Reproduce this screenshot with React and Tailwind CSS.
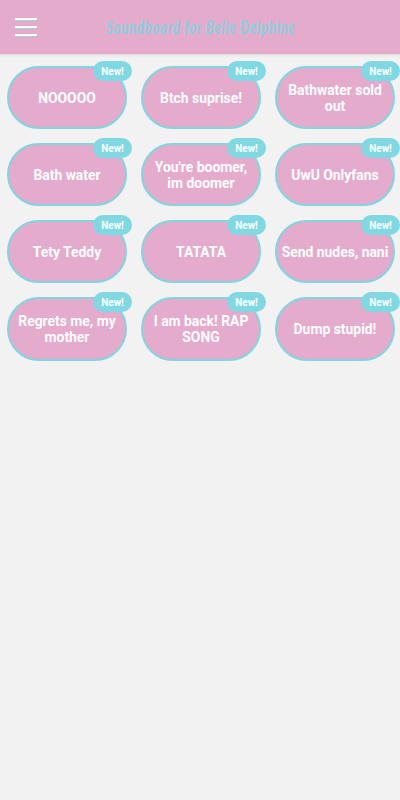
import React from 'react';

const SOUNDS = [
  'NOOOOO', 'Btch suprise!', 'Bathwater sold out',
  'Bath water', "You're boomer, im doomer", 'UwU Onlyfans',
  'Tety Teddy', 'TATATA', 'Send nudes, nani',
  'Regrets me, my mother', 'I am back! RAP SONG', 'Dump stupid!',
];

function Header() {
  return (
    <header className="h-[54px] flex items-center bg-[#e5abcc] pl-[15px] shadow-[0_1px_3px_rgba(0,0,0,0.12)]">
      <button type="button" aria-label="Menu" className="flex-none w-[22px] grid gap-[6px]">
        {[0, 1, 2].map((i) => (
          <span key={i} className="h-[2px] bg-white shadow-[0_1px_0_#a5cbdc]" />
        ))}
      </button>
      <h1 className="ml-[69px] w-[190px] flex-none whitespace-nowrap origin-left scale-x-[0.71] text-[18px] leading-[22px] tracking-[1.2px] font-black italic text-[#8ccfde] font-['Lato',cursive]">
        Soundboard for Belle Delphine
      </h1>
    </header>
  );
}

function SoundButton({ label }) {
  return (
    <div className="relative w-[120px] h-[63.15px]">
      <button type="button" className="w-full h-full rounded-full border-2 border-[#80d5df] bg-[#e5abcc] px-1 pt-[0.6px] text-center text-[13.9px] leading-4 font-bold text-white">
        {label}
      </button>
      <span className="absolute -top-[5px] -right-[5px] w-[39px] h-5 rounded-full bg-[#80d9e2] text-center text-[10px] leading-[21px] font-bold text-white">
        New!
      </span>
    </div>
  );
}

export default function App() {
  return (
    <div className="w-[400px] h-[800px] overflow-hidden bg-[#f2f2f2] font-[Roboto,sans-serif]">
      <Header />
      <main className="grid grid-cols-[repeat(3,120px)] gap-[14px] pl-[7px] pt-3">
        {SOUNDS.map((s) => <SoundButton key={s} label={s} />)}
      </main>
    </div>
  );
}
